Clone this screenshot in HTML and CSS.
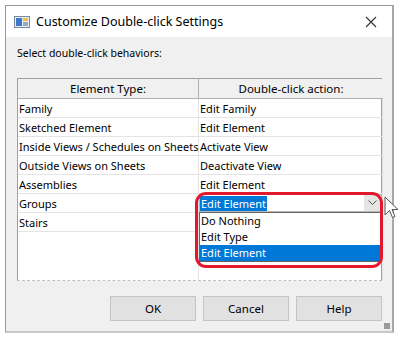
FILE: index.html
```html
<!DOCTYPE html>
<html lang="en">
<head>
    <meta charset="UTF-8">
    <title>Customize Double-click Settings</title>
    <link rel="stylesheet" href="styles.css">
</head>
<body>
    <div class="window">
        <div class="titlebar">
            <svg class="app-icon" width="16" height="12" viewBox="0 0 16 12">
                <rect x="0.5" y="0.5" width="15" height="11" fill="#e8eef5" stroke="#7a8ba0"/>
                <rect x="2" y="2" width="6" height="8" fill="#3c78c8"/>
                <rect x="9" y="2" width="5" height="3" fill="#f0c040"/>
                <rect x="9" y="6" width="5" height="4" fill="#9aa8b8"/>
            </svg>
            <span class="title">Customize Double-click Settings</span>
            <svg class="close" width="12" height="12" viewBox="0 0 12 12">
                <path d="M1 1 L11 11 M11 1 L1 11" stroke="#333" stroke-width="1.1"/>
            </svg>
        </div>
        <div class="content">
            <p class="prompt">Select double-click behaviors:</p>
            <div class="grid">
                <div class="head">Element Type:</div>
                <div class="head">Double-click action:</div>

                <div class="cell">Family</div>
                <div class="cell">Edit Family</div>
                <div class="cell">Sketched Element</div>
                <div class="cell">Edit Element</div>
                <div class="cell">Inside Views / Schedules on Sheets</div>
                <div class="cell">Activate View</div>
                <div class="cell">Outside Views on Sheets</div>
                <div class="cell">Deactivate View</div>
                <div class="cell">Assemblies</div>
                <div class="cell">Edit Element</div>
                <div class="cell">Groups</div>
                <div class="cell combo-cell">
                    <div class="combo">
                        <span class="combo-value">Edit Element</span>
                        <span class="combo-btn">
                            <svg width="9" height="6" viewBox="0 0 9 6"><path d="M0.5 0.5 L4.5 4.5 L8.5 0.5" fill="none" stroke="#555"/></svg>
                        </span>
                    </div>
                    <ul class="options">
                        <li>Do Nothing</li>
                        <li>Edit Type</li>
                        <li class="active">Edit Element</li>
                    </ul>
                    <div class="mark"></div>
                    <svg class="cursor" width="16" height="24" viewBox="0 0 16 24">
                        <path d="M1 1 L1 19 L5.5 14.5 L8.5 21.5 L11 20.5 L8 13.5 L14 13.5 Z" fill="#fff" stroke="#555" stroke-width="1"/>
                    </svg>
                </div>
                <div class="cell">Stairs</div>
                <div class="cell"></div>
                <div class="filler"></div>
                <div class="filler"></div>
            </div>
            <div class="buttons">
                <button>OK</button>
                <button>Cancel</button>
                <button>Help</button>
            </div>
            <div class="grip"></div>
        </div>
    </div>
</body>
</html>
```

FILE: styles.css
```css
body {
    margin: 0;
    background-color: #fff;
    font-family: "Noto Sans", "Open Sans", sans-serif;
    color: #000;
}

.window {
    margin: 5px 0 0 5px;
    width: 386px;
    height: 325px;
    border: 1px solid #9a9a9a;
    border-right: 2px solid #a8a8a8;
    border-bottom: 2px solid #c8c8c8;
    display: flex;
    flex-direction: column;
    background-color: #f0f0f0;
}

.titlebar {
    height: 31px;
    background-color: #fff;
    display: flex;
    align-items: center;
    padding: 0 0 0 8px;
}

.app-icon {
    margin-right: 6px;
}

.title {
    font-size: 12.5px;
    flex: 1;
}

.close {
    margin-right: 15px;
}

.content {
    flex: 1;
    position: relative;
    padding: 0 10px 0 11px;
}

.prompt {
    font-size: 10.5px;
    margin: 9px 0 18px 0;
}

.grid {
    display: grid;
    grid-template-columns: 181px 184px;
    grid-template-rows: 20px repeat(7, 19px) 48px;
    border: 1px solid #a0a0a0;
    border-bottom: 1px dashed #c0c0c0;
    background-color: #fff;
}

.head {
    background-color: #f0f0f0;
    border-right: 1px solid #b0b0b0;
    border-bottom: 1px solid #b0b0b0;
    font-size: 11.5px;
    display: flex;
    align-items: center;
    justify-content: center;
}

.head:nth-child(2) {
    border-right: none;
}

.cell {
    font-size: 11px;
    border-bottom: 1px solid #e4e4e4;
    border-right: 1px solid #e4e4e4;
    padding-left: 1px;
    display: flex;
    align-items: center;
    white-space: nowrap;
    overflow: visible;
}

.filler {
    border-right: 1px solid #e4e4e4;
}

.combo-cell {
    position: relative;
    padding: 0;
}

.combo {
    width: 100%;
    height: 100%;
    display: flex;
    align-items: center;
    border: 1px solid #b8b8b8;
    box-sizing: border-box;
    background-color: #fff;
}

.combo-value {
    background-color: #0078d7;
    color: #fff;
    padding: 0 1px;
    line-height: 15px;
}

.combo-btn {
    margin-left: auto;
    width: 17px;
    height: 100%;
    background-color: #e5e5e5;
    display: flex;
    align-items: center;
    justify-content: center;
}

.options {
    position: absolute;
    top: 18px;
    left: 0;
    width: 100%;
    box-sizing: border-box;
    margin: 0;
    padding: 0;
    list-style: none;
    background-color: #fff;
    border: 1px solid #646464;
    z-index: 2;
}

.options li {
    height: 16px;
    line-height: 16px;
    padding-left: 1px;
}

.options li.active {
    background-color: #0078d7;
    color: #fff;
}

.mark {
    position: absolute;
    top: -2px;
    left: -4px;
    width: 182px;
    height: 70px;
    border: 3px solid #e3182d;
    border-radius: 11px;
    z-index: 3;
}

.cursor {
    position: absolute;
    top: 2px;
    right: -18px;
    z-index: 4;
}

.buttons {
    display: flex;
    justify-content: flex-end;
    gap: 7px;
    margin-top: 15px;
}

.buttons button {
    width: 86px;
    height: 25px;
    background-color: #e1e1e1;
    border: 1px solid #c4c4c4;
    font-family: inherit;
    font-size: 11.5px;
    padding: 0;
}

.grip {
    position: absolute;
    right: 2px;
    bottom: 2px;
    width: 6px;
    height: 6px;
    background-image: radial-gradient(#9a9a9a 0.8px, transparent 1px);
    background-size: 2px 2px;
}
```
